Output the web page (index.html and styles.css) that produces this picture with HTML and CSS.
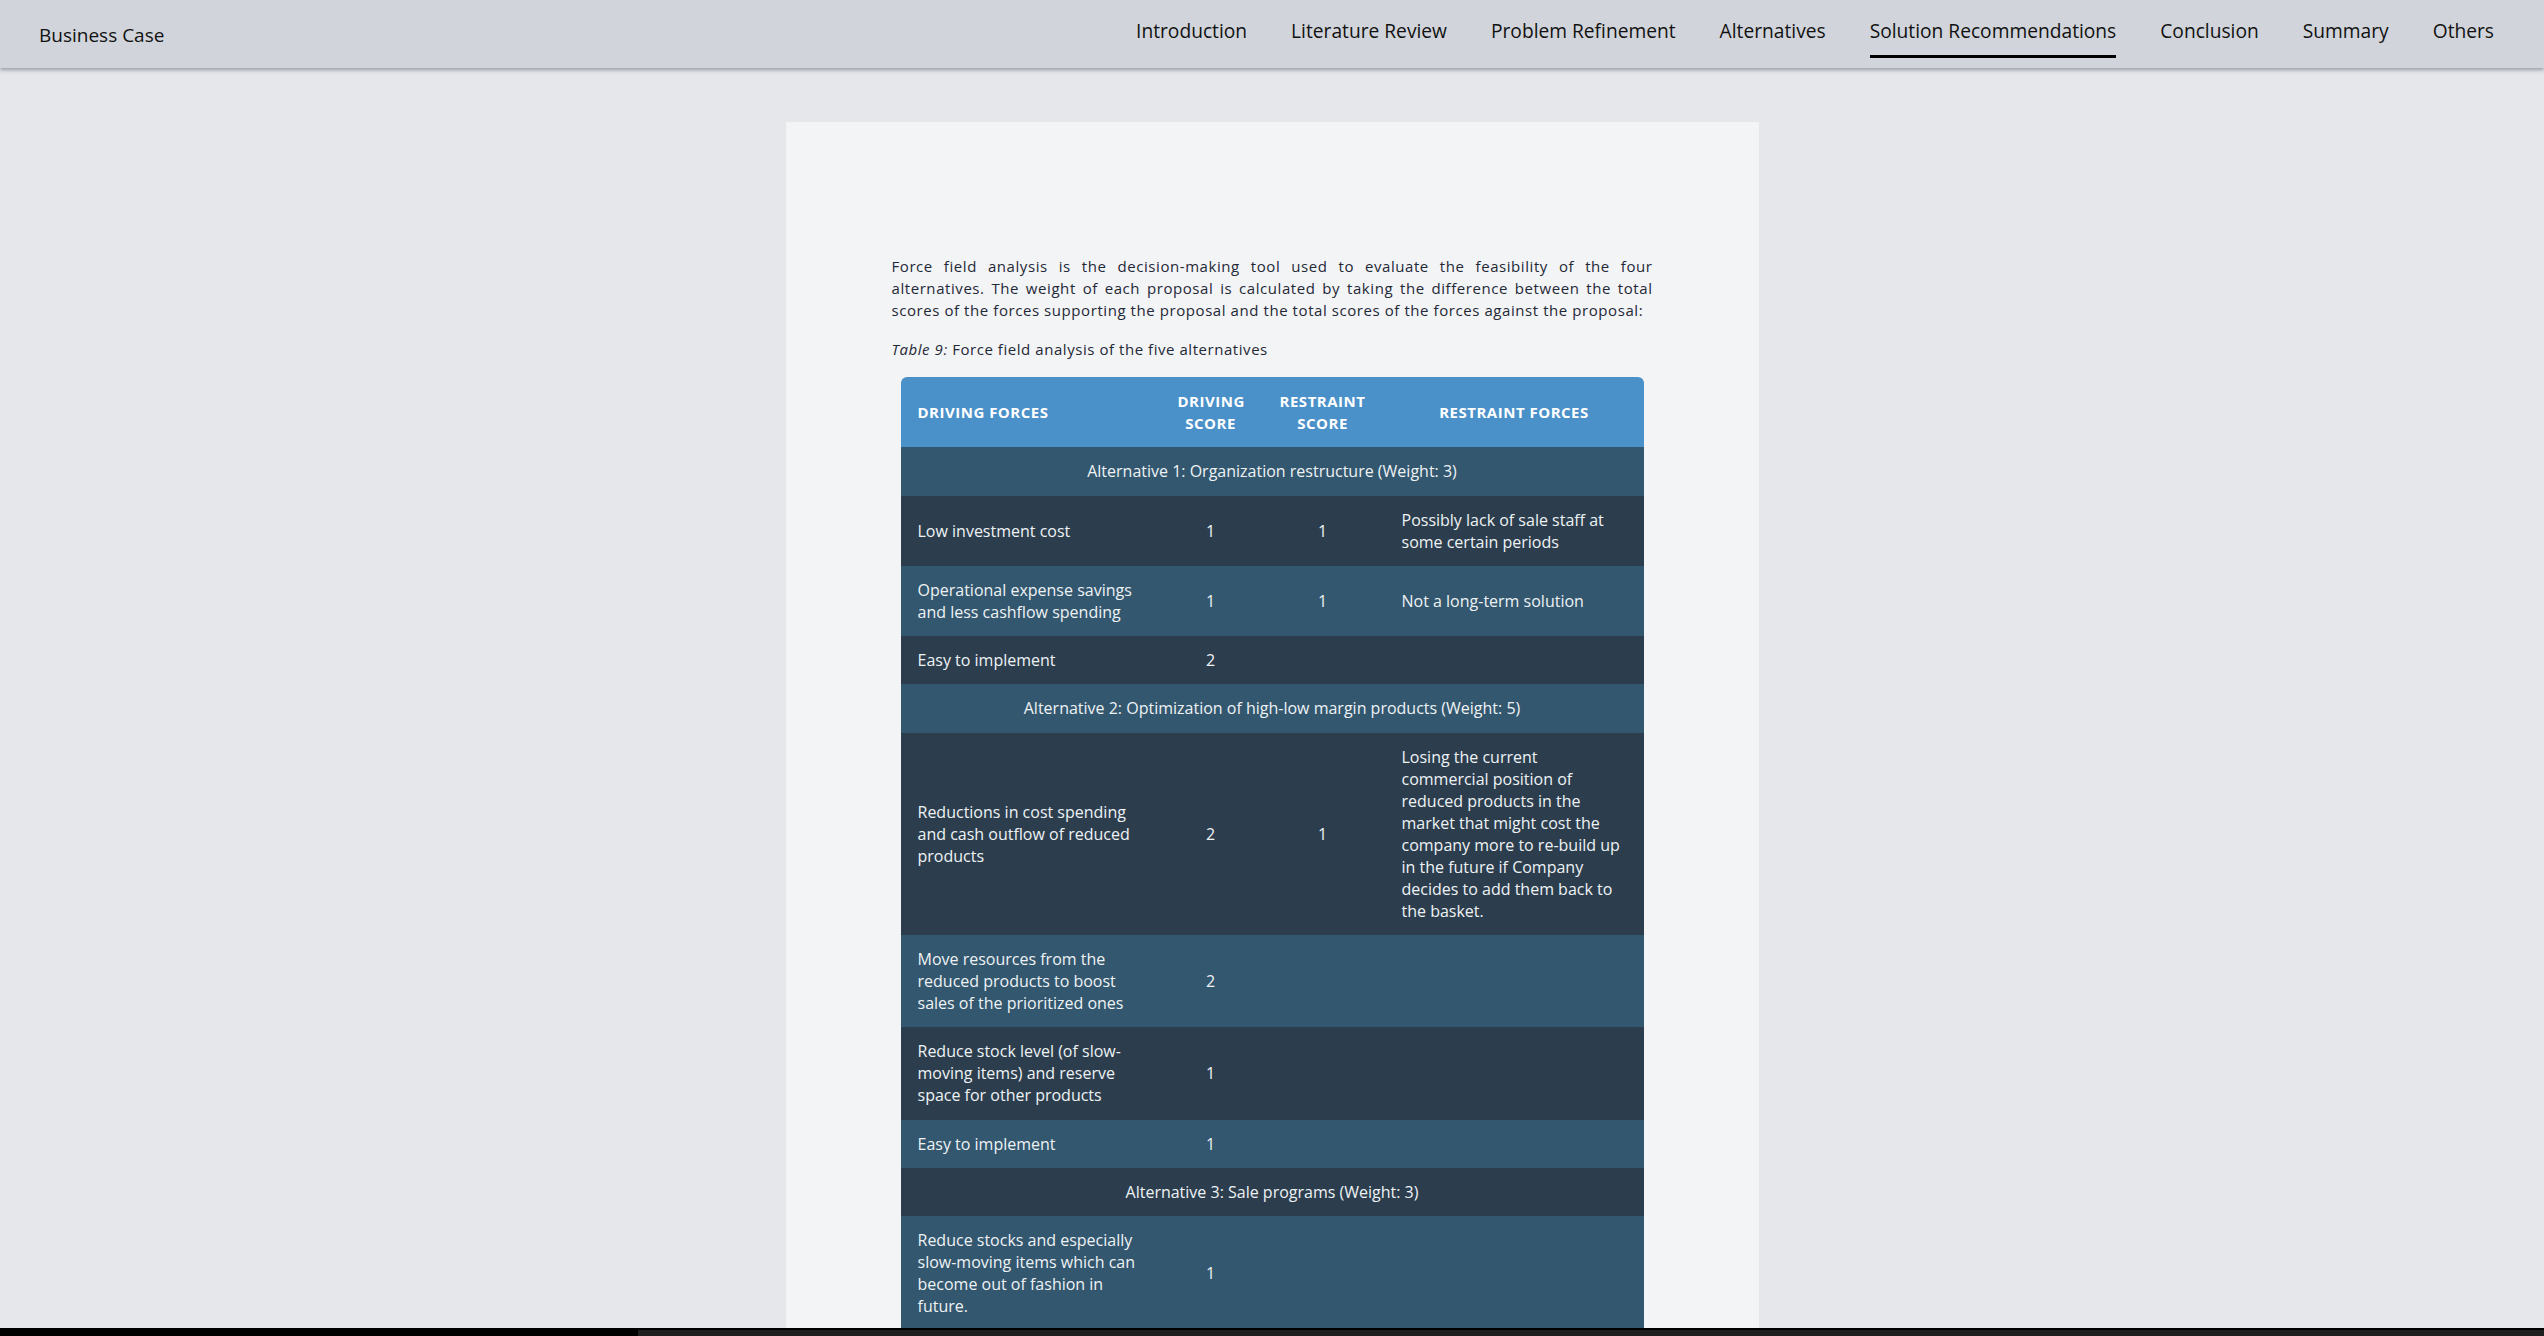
FILE: index.html
```html
<!DOCTYPE html>
<html lang="en">
<head>
<meta charset="utf-8">
<title>Business Case - Solution Recommendations</title>
<link rel="stylesheet" href="styles.css">
</head>
<body>
<header class="topbar">
  <div class="brand">Business Case</div>
  <nav class="nav">
    <a class="nav-item" href="#">Introduction</a>
    <a class="nav-item" href="#">Literature Review</a>
    <a class="nav-item" href="#">Problem Refinement</a>
    <a class="nav-item" href="#">Alternatives</a>
    <a class="nav-item active" href="#">Solution Recommendations</a>
    <a class="nav-item" href="#">Conclusion</a>
    <a class="nav-item" href="#">Summary</a>
    <a class="nav-item" href="#">Others</a>
  </nav>
</header>
<main class="page">
  <article class="sheet">
    <p class="lead"><span class="line">Force field analysis is the decision-making tool used to evaluate the feasibility of the four</span> <span class="line">alternatives. The weight of each proposal is calculated by taking the difference between the total</span> <span class="line last">scores of the forces supporting the proposal and the total scores of the forces against the proposal:</span></p>
    <p class="caption"><em>Table 9:</em> Force field analysis of the five alternatives</p>
    <table class="ffa">
      <colgroup>
        <col class="c-drive">
        <col class="c-dscore">
        <col class="c-rscore">
        <col class="c-restr">
      </colgroup>
      <thead>
        <tr>
          <th class="left">Driving forces</th>
          <th>Driving score</th>
          <th>Restraint score</th>
          <th>Restraint forces</th>
        </tr>
      </thead>
      <tbody>
        <tr class="group"><td colspan="4">Alternative 1: Organization restructure (Weight: 3)</td></tr>
        <tr>
          <td>Low investment cost</td>
          <td class="num">1</td>
          <td class="num">1</td>
          <td>Possibly lack of sale staff at<br>some certain periods</td>
        </tr>
        <tr>
          <td>Operational expense savings<br>and less cashflow spending</td>
          <td class="num">1</td>
          <td class="num">1</td>
          <td>Not a long-term solution</td>
        </tr>
        <tr>
          <td>Easy to implement</td>
          <td class="num">2</td>
          <td class="num"></td>
          <td></td>
        </tr>
        <tr class="group"><td colspan="4">Alternative 2: Optimization of high-low margin products (Weight: 5)</td></tr>
        <tr>
          <td>Reductions in cost spending<br>and cash outflow of reduced<br>products</td>
          <td class="num">2</td>
          <td class="num">1</td>
          <td>Losing the current<br>commercial position of<br>reduced products in the<br>market that might cost the<br>company more to re-build up<br>in the future if Company<br>decides to add them back to<br>the basket.</td>
        </tr>
        <tr>
          <td>Move resources from the<br>reduced products to boost<br>sales of the prioritized ones</td>
          <td class="num">2</td>
          <td class="num"></td>
          <td></td>
        </tr>
        <tr>
          <td>Reduce stock level (of slow-<br>moving items) and reserve<br>space for other products</td>
          <td class="num">1</td>
          <td class="num"></td>
          <td></td>
        </tr>
        <tr>
          <td>Easy to implement</td>
          <td class="num">1</td>
          <td class="num"></td>
          <td></td>
        </tr>
        <tr class="group"><td colspan="4">Alternative 3: Sale programs (Weight: 3)</td></tr>
        <tr>
          <td>Reduce stocks and especially<br>slow-moving items which can<br>become out of fashion in<br>future.</td>
          <td class="num">1</td>
          <td class="num"></td>
          <td></td>
        </tr>
      </tbody>
    </table>
  </article>
</main>
<div class="taskbar"><div class="taskbar-fill"></div></div>
</body>
</html>
```
FILE: styles.css
```css
html, body {
  margin: 0;
  padding: 0;
}

body {
  background: #e5e7eb;
  font-family: "Open Sans", "Noto Sans", "Liberation Sans", sans-serif;
  color: #111827;
}

.topbar {
  position: relative;
  z-index: 2;
  height: 68px;
  box-sizing: border-box;
  background: #d1d5db;
  box-shadow: 0 2px 4px rgba(55, 65, 81, 0.45);
  display: flex;
  justify-content: space-between;
  align-items: flex-start;
  padding: 0 50px 0 39px;
}

.brand {
  font-size: 19px;
  line-height: 24px;
  padding-top: 23px;
  color: #111;
}

.nav {
  display: flex;
  gap: 44px;
}

.nav-item {
  font-size: 19.2px;
  line-height: 24px;
  padding-top: 19px;
  padding-bottom: 12px;
  border-bottom: 3px solid transparent;
  color: #111;
  text-decoration: none;
  white-space: nowrap;
}

.nav-item.active {
  border-bottom-color: #000;
}

.page {
  padding-top: 54px;
}

.sheet {
  width: 973px;
  margin: 0 auto;
  box-sizing: border-box;
  background: #f3f4f6;
  padding: 133px 106px 60px;
}

.lead {
  margin: 0 0 17px;
  font-size: 15px;
  line-height: 22px;
  letter-spacing: 0.57px;
  color: #1f2937;
}

.lead .line {
  display: block;
  text-align: justify;
  text-align-last: justify;
}

.lead .line.last {
  text-align-last: left;
}

.caption {
  margin: 0 0 17px;
  font-size: 15px;
  line-height: 22px;
  letter-spacing: 0.55px;
  color: #1f2937;
}

.ffa {
  width: 743px;
  margin: 0 auto;
  border-collapse: separate;
  border-spacing: 0;
  table-layout: fixed;
  font-size: 16px;
  line-height: 22px;
  color: #eef2f5;
}

.c-drive { width: 260px; }
.c-dscore { width: 100px; }
.c-rscore { width: 124px; }
.c-restr { width: 259px; }

.ffa th,
.ffa td {
  padding: 13px 17px 13.3px;
  vertical-align: middle;
}

.ffa thead th {
  background: #4a90c9;
  color: #fff;
  font-size: 15px;
  font-weight: 700;
  letter-spacing: 0.5px;
  text-transform: uppercase;
  text-align: center;
}

.ffa thead th.left {
  text-align: left;
}

.ffa thead th:first-child {
  border-top-left-radius: 6px;
}

.ffa thead th:last-child {
  border-top-right-radius: 6px;
}

.ffa tbody tr:nth-child(odd) {
  background: #33576e;
}

.ffa tbody tr:nth-child(even) {
  background: #2c3e4d;
}

.ffa .num {
  text-align: center;
}

.ffa .group td {
  text-align: center;
}

.taskbar {
  position: fixed;
  left: 0;
  right: 0;
  bottom: 0;
  height: 8px;
  background: #000;
  z-index: 5;
}

.taskbar-fill {
  margin-left: 638px;
  margin-top: 2px;
  height: 6px;
  background: #1f1f1f;
}
```
